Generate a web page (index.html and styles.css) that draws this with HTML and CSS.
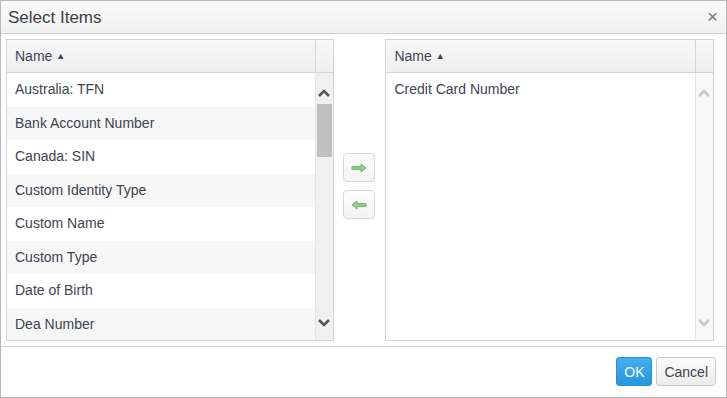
FILE: index.html
```html
<!DOCTYPE html>
<html lang="en">
<head>
  <meta charset="UTF-8">
  <title>Select Items</title>
  <link rel="stylesheet" href="styles.css">
</head>
<body>
  <div class="dialog">
    <div class="titlebar">
      <span class="title">Select Items</span>
      <span class="close">&times;</span>
    </div>

    <div class="content">
      <div class="grid">
        <div class="grid-head">
          <div class="col">Name <span class="sort">&#9650;</span></div>
          <div class="head-pad"></div>
        </div>
        <div class="grid-body">
          <div class="rows">
            <div class="row">Australia: TFN</div>
            <div class="row alt">Bank Account Number</div>
            <div class="row">Canada: SIN</div>
            <div class="row alt">Custom Identity Type</div>
            <div class="row">Custom Name</div>
            <div class="row alt">Custom Type</div>
            <div class="row">Date of Birth</div>
            <div class="row alt">Dea Number</div>
          </div>
          <div class="scroll">
            <svg class="chev" width="14" height="10" viewBox="0 0 14 10"><path d="M2 8 L7 3 L12 8" fill="none" stroke="#555" stroke-width="2.6"/></svg>
            <div class="track"><div class="thumb"></div></div>
            <svg class="chev" width="14" height="10" viewBox="0 0 14 10"><path d="M2 2 L7 7 L12 2" fill="none" stroke="#555" stroke-width="2.6"/></svg>
          </div>
        </div>
      </div>

      <div class="moves">
        <button class="move">
          <svg width="16" height="10" viewBox="0 0 16 10"><path d="M1 3.5 H10 V1 L15 5 L10 9 V6.5 H1 Z" fill="#8fd08f" stroke="#5aac5a" stroke-width="0.8"/></svg>
        </button>
        <button class="move">
          <svg width="16" height="10" viewBox="0 0 16 10"><path d="M15 3.5 H6 V1 L1 5 L6 9 V6.5 H15 Z" fill="#8fd08f" stroke="#5aac5a" stroke-width="0.8"/></svg>
        </button>
      </div>

      <div class="grid">
        <div class="grid-head">
          <div class="col">Name <span class="sort">&#9650;</span></div>
          <div class="head-pad"></div>
        </div>
        <div class="grid-body">
          <div class="rows">
            <div class="row">Credit Card Number</div>
          </div>
          <div class="scroll off">
            <svg class="chev" width="14" height="10" viewBox="0 0 14 10"><path d="M2 8 L7 3 L12 8" fill="none" stroke="#c8c8c8" stroke-width="2.6"/></svg>
            <div class="track"></div>
            <svg class="chev" width="14" height="10" viewBox="0 0 14 10"><path d="M2 2 L7 7 L12 2" fill="none" stroke="#c8c8c8" stroke-width="2.6"/></svg>
          </div>
        </div>
      </div>
    </div>

    <div class="footer">
      <button class="btn primary">OK</button>
      <button class="btn">Cancel</button>
    </div>
  </div>
</body>
</html>
```

FILE: styles.css
```css
html,body{margin:0;padding:0}
body{font-family:"Liberation Sans",Arial,sans-serif;font-size:14px;color:#3e4450;background:#fff}
.dialog{width:725px;height:396px;border:1px solid #b9b9b9;display:flex;flex-direction:column;background:#fff}
.titlebar{height:32px;border-bottom:1px solid #d3d3d3;background:linear-gradient(#fafafa,#f1f1f1);display:flex;align-items:center;justify-content:space-between;padding:0 8px 0 7px}
.title{font-size:17px;color:#3b3f47;margin-top:1px}
.close{font-size:19px;color:#777;line-height:1;margin-top:-1px}
.content{display:flex;padding:5px 12px 5px 5px;height:302px}
.grid{width:326px;border:1px solid #d4d4d4;display:flex;flex-direction:column;background:#fff}
.grid + .moves + .grid{width:327px}
.grid-head{height:32px;border-bottom:1px solid #d4d4d4;display:flex;background:linear-gradient(#f8f8f8,#efefef)}
.col{flex:1;padding-left:8px;line-height:32px;border-right:1px solid #d4d4d4}
.sort{font-size:9px;vertical-align:2px}
.head-pad{width:17px}
.grid-body{flex:1;display:flex;overflow:hidden}
.rows{flex:1;border-right:1px solid #e4e4e4}
.row{height:33.5px;line-height:32px;padding-left:8px}
.row.alt{background:#f7f7f7}
.scroll{width:17px;background:#f0f0f0;display:flex;flex-direction:column;align-items:center}
.scroll.off{background:#f8f8f8}
.chev{margin:15px 0 6px;flex:none}
.scroll .chev:last-child{margin:4px 0 12px}
.track{flex:1;width:17px}
.thumb{height:53px;background:#c1c1c1;margin:0 1px}
.moves{width:52px;display:flex;flex-direction:column;align-items:center;padding-top:114px;gap:8px}
.move{width:32px;height:29px;border:1px solid #d9d9d9;border-radius:4px;background:linear-gradient(#fdfdfd,#f3f3f3);padding:0;display:flex;align-items:center;justify-content:center}
.footer{flex:1;border-top:1px solid #d3d3d3;display:flex;justify-content:flex-end;align-items:flex-start;padding:10px 10px 0 0;gap:4px}
.btn{height:29px;padding:0 7px;font-family:"Liberation Sans",Arial,sans-serif;font-size:14px;color:#3e4450;border:1px solid #c9c9c9;border-radius:3px;background:linear-gradient(#fbfbfb,#ececec)}
.btn.primary{color:#fff;border-color:#2a8fd4;background:linear-gradient(#43adf0,#2796dd);width:36px;padding:0}
```
